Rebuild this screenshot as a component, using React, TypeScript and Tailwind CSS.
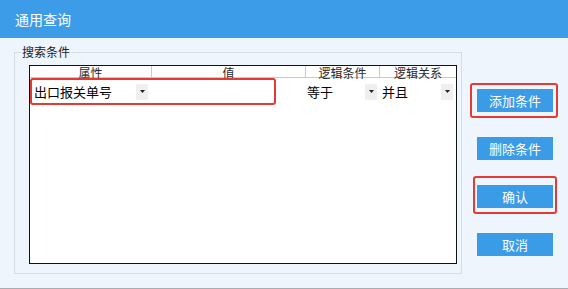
import React from 'react';

const font = { fontFamily: '"Noto Sans CJK SC", "Noto Sans", sans-serif' };

const Arrow = ({ className = '' }: { className?: string }) => (
    <div className={`flex h-[16px] w-[12px] items-center justify-center bg-[#efefef] ${className}`}>
        <svg width="5" height="3" viewBox="0 0 5 3">
            <path d="M0 0 L5 0 L2.5 3 Z" fill="#222" />
        </svg>
    </div>
);

const Btn = ({ label, mark }: { label: string; mark?: string }) => (
    <div className="relative">
        {mark && <div className={`absolute rounded-[3px] border-2 border-[#e23b35] ${mark}`} />}
        <button className="flex h-[23px] w-[76px] items-center justify-center bg-[#3a9be6] text-[13px] text-white">
            {label}
        </button>
    </div>
);

const App = () => {
    return (
        <div className="flex h-[289px] w-[568px] flex-col bg-[#eef5fd]" style={font}>
            {/* Title bar */}
            <div className="flex h-[38px] items-center bg-[#3d9ce8] pl-[15px] text-[14px] text-white">
                通用查询
            </div>

            {/* Body */}
            <div className="flex flex-1 border-b border-[#a9adb2]">
                <fieldset className="ml-[14px] mt-[6px] mb-[14px] w-[448px] border border-[#d3dde8] pl-[14px] pr-[4px] pb-[7px]">
                    <legend className="ml-[-8px] px-[1px] text-[12px] leading-[16px] text-[#222]">搜索条件</legend>

                    {/* Table */}
                    <div className="relative mt-[5px] flex h-[199px] w-[428px] flex-col border border-[#111] bg-white">
                        <div className="flex h-[12px] border-b border-[#c9c9c9] text-[12px] leading-[13px] text-[#2a2a2a]">
                            <div className="flex w-[122px] justify-center border-r border-[#c9c9c9]">属性</div>
                            <div className="flex w-[154px] justify-center border-r border-[#c9c9c9]">值</div>
                            <div className="flex w-[74px] justify-center border-r border-[#c9c9c9]">逻辑条件</div>
                            <div className="flex flex-1 justify-center">逻辑关系</div>
                        </div>
                        <div className="flex h-[27px] items-center text-[13px] text-black">
                            <div className="flex w-[122px] items-center justify-between pl-[4px] pr-[4px]">
                                <span>出口报关单号</span>
                                <Arrow />
                            </div>
                            <div className="w-[154px]" />
                            <div className="flex w-[74px] items-center justify-between pl-[1px] pr-[3px]">
                                <span>等于</span>
                                <Arrow />
                            </div>
                            <div className="flex flex-1 items-center justify-between pl-[2px] pr-[3px]">
                                <span>并且</span>
                                <Arrow />
                            </div>
                        </div>
                        {/* highlight annotation */}
                        <div className="absolute left-[0px] top-[12px] h-[27px] w-[246px] rounded-[3px] border-2 border-[#e23b35]" />
                    </div>
                </fieldset>

                {/* Buttons */}
                <div className="flex flex-col gap-[25px] pl-[15px] pt-[51px]">
                    <Btn label="添加条件" mark="-left-[7px] -right-[5px] -top-[6px] -bottom-[6px]" />
                    <Btn label="删除条件" />
                    <Btn label="确认" mark="-left-[4px] -right-[4px] -top-[9px] -bottom-[6px]" />
                    <Btn label="取消" />
                </div>
            </div>
        </div>
    );
};

export default App;
